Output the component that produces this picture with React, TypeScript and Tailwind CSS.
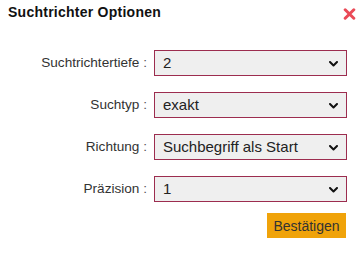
import React from "react";

const rows: { label: string; value: string; options: string[] }[] = [
  { label: "Suchtrichtertiefe", value: "2", options: ["1", "2", "3", "4", "5"] },
  { label: "Suchtyp", value: "exakt", options: ["exakt", "unscharf"] },
  { label: "Richtung", value: "Suchbegriff als Start", options: ["Suchbegriff als Start", "Suchbegriff als Ziel"] },
  { label: "Präzision", value: "1", options: ["1", "2", "3"] },
];

function Chevron() {
  return (
    <svg width="9" height="6" viewBox="0 0 9 6" className="pointer-events-none absolute right-[9px] top-[11px]">
      <path d="M1 1 L4.5 4.5 L8 1" fill="none" stroke="#111" strokeWidth="2" strokeLinecap="round" strokeLinejoin="round" />
    </svg>
  );
}

export default function App() {
  return (
    <div className="w-[361px] h-[272px] bg-white font-['Liberation_Sans',Arial,sans-serif] text-[#333]">
      <div className="flex items-start justify-between pl-[8px] pr-[5px] pt-[4px]">
        <h1 className="text-[14px] leading-[16px] font-bold tracking-[0.25px] text-[#111]">Suchtrichter Optionen</h1>
        <button className="mt-[4px] w-[13px] h-[12px] flex items-center justify-center" aria-label="Schließen">
          <svg width="13" height="12" viewBox="0 0 13 12">
            <path d="M2.2 1.8 L10.8 10.2 M10.8 1.8 L2.2 10.2" stroke="#ea4a57" strokeWidth="3" strokeLinecap="round" />
          </svg>
        </button>
      </div>
      <div className="mt-[30px] flex flex-col gap-[16px] pr-[14px]">
        {rows.map((r) => (
          <div key={r.label} className="flex items-center justify-end h-[26px]">
            <label className="text-[13.6px] leading-[16px] text-[#333] mr-[7px]">
              {r.label} <span className="text-[#555]">:</span>
            </label>
            <div className="relative w-[193px] h-[26px]">
              <select
                defaultValue={r.value}
                className="appearance-none w-full h-full border border-[#9c2d4f] bg-[#efefef] pl-[8px] pr-[24px] text-[15px] leading-[18px] text-[#222] outline-none font-['Liberation_Sans',Arial,sans-serif]"
              >
                {r.options.map((o) => (
                  <option key={o} value={o}>
                    {o}
                  </option>
                ))}
              </select>
              <Chevron />
            </div>
          </div>
        ))}
      </div>
      <div className="flex justify-end pr-[15px] mt-[11px]">
        <button className="w-[79px] h-[25px] bg-[#f0a30a] text-[14px] leading-[16px] text-[#333]">
          Bestätigen
        </button>
      </div>
    </div>
  );
}
